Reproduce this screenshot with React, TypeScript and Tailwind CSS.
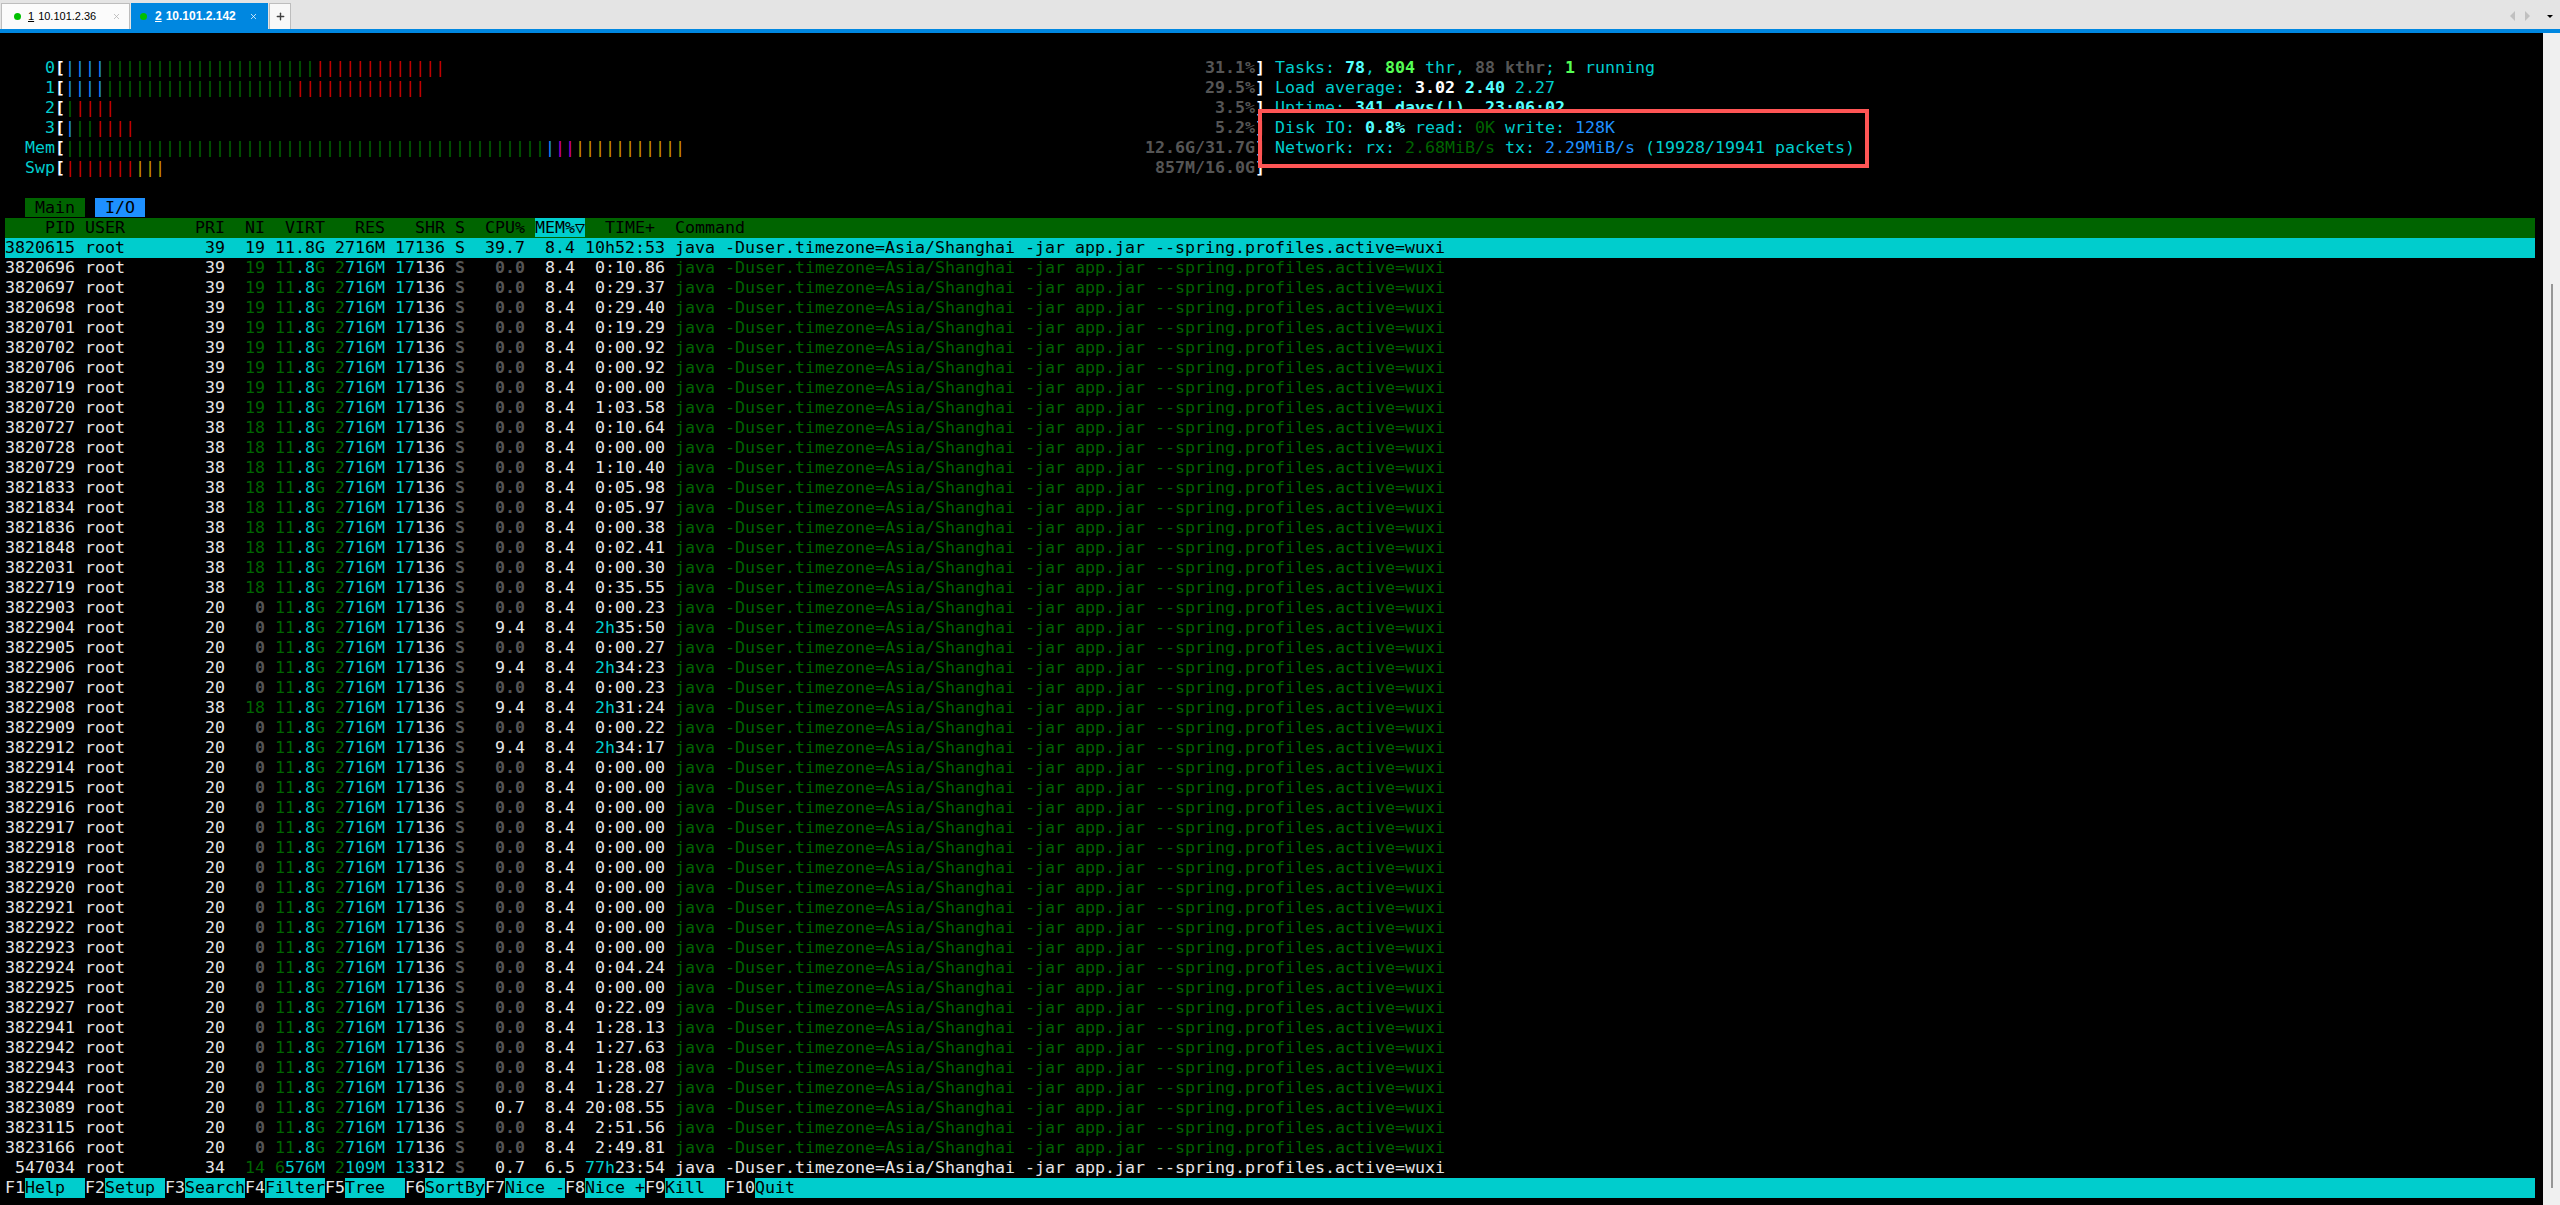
import { Plus, X } from "lucide-react";

const GREEN = "text-[#006400]";
const CYAN = "text-[#00cdcd]";
const BLUE = "text-[#1e90ff]";
const RED = "text-[#cd0000]";
const GRAY = "text-[#555555] font-bold";
const WHITE = "text-[#e5e5e5]";
const YELLOW = "text-[#cd9a00]";
const MAGENTA = "text-[#cd00cd]";

const CMD = "java -Duser.timezone=Asia/Shanghai -jar app.jar --spring.profiles.active=wuxi";

type Seg = [number, string];

const METERS: { label: string; bars: Seg[]; value: string }[] = [
  { label: "    0", bars: [[4, BLUE], [21, GREEN], [13, RED]], value: "31.1%" },
  { label: "    1", bars: [[4, BLUE], [19, GREEN], [13, RED]], value: "29.5%" },
  { label: "    2", bars: [[1, GREEN], [4, RED]], value: "3.5%" },
  { label: "    3", bars: [[1, BLUE], [2, GREEN], [4, RED]], value: "5.2%" },
  { label: "  Mem", bars: [[48, GREEN], [1, BLUE], [2, MAGENTA], [11, YELLOW]], value: "12.6G/31.7G" },
  { label: "  Swp", bars: [[7, RED], [3, YELLOW]], value: "857M/16.0G" },
];

// pid, pri, ni, time, cpu
type Row = { pid: string; pri: string; ni: string; time: string; cpu?: string };

const r = (pid: string, pri: string, ni: string, time: string, cpu?: string): Row => ({ pid, pri, ni, time, cpu });

const THREADS: Row[] = [
  r("3820696", "39", "19", "0:10.86"),
  r("3820697", "39", "19", "0:29.37"),
  r("3820698", "39", "19", "0:29.40"),
  r("3820701", "39", "19", "0:19.29"),
  r("3820702", "39", "19", "0:00.92"),
  r("3820706", "39", "19", "0:00.92"),
  r("3820719", "39", "19", "0:00.00"),
  r("3820720", "39", "19", "1:03.58"),
  r("3820727", "38", "18", "0:10.64"),
  r("3820728", "38", "18", "0:00.00"),
  r("3820729", "38", "18", "1:10.40"),
  r("3821833", "38", "18", "0:05.98"),
  r("3821834", "38", "18", "0:05.97"),
  r("3821836", "38", "18", "0:00.38"),
  r("3821848", "38", "18", "0:02.41"),
  r("3822031", "38", "18", "0:00.30"),
  r("3822719", "38", "18", "0:35.55"),
  r("3822903", "20", "0", "0:00.23"),
  r("3822904", "20", "0", "2h35:50", "9.4"),
  r("3822905", "20", "0", "0:00.27"),
  r("3822906", "20", "0", "2h34:23", "9.4"),
  r("3822907", "20", "0", "0:00.23"),
  r("3822908", "38", "18", "2h31:24", "9.4"),
  r("3822909", "20", "0", "0:00.22"),
  r("3822912", "20", "0", "2h34:17", "9.4"),
  r("3822914", "20", "0", "0:00.00"),
  r("3822915", "20", "0", "0:00.00"),
  r("3822916", "20", "0", "0:00.00"),
  r("3822917", "20", "0", "0:00.00"),
  r("3822918", "20", "0", "0:00.00"),
  r("3822919", "20", "0", "0:00.00"),
  r("3822920", "20", "0", "0:00.00"),
  r("3822921", "20", "0", "0:00.00"),
  r("3822922", "20", "0", "0:00.00"),
  r("3822923", "20", "0", "0:00.00"),
  r("3822924", "20", "0", "0:04.24"),
  r("3822925", "20", "0", "0:00.00"),
  r("3822927", "20", "0", "0:22.09"),
  r("3822941", "20", "0", "1:28.13"),
  r("3822942", "20", "0", "1:27.63"),
  r("3822943", "20", "0", "1:28.08"),
  r("3822944", "20", "0", "1:28.27"),
  r("3823089", "20", "0", "20:08.55", "0.7"),
  r("3823115", "20", "0", "2:51.56"),
  r("3823166", "20", "0", "2:49.81"),
];

const FKEYS = [
  ["F1", "Help  "],
  ["F2", "Setup "],
  ["F3", "Search"],
  ["F4", "Filter"],
  ["F5", "Tree  "],
  ["F6", "SortBy"],
  ["F7", "Nice -"],
  ["F8", "Nice +"],
  ["F9", "Kill  "],
  ["F10", "Quit"],
];

function Line({ className = "", children }: { className?: string; children?: React.ReactNode }) {
  return <div className={`h-5 leading-5 whitespace-pre ${className}`}>{children}</div>;
}

function Meter({ label, bars, value }: { label: string; bars: Seg[]; value: string }) {
  const used = bars.reduce((n, [c]) => n + c, 0);
  return (
    <>
      <span className={CYAN}>{label}</span>
      <span className="text-white font-bold">[</span>
      {bars.map(([count, color], i) => (
        <span key={i} className={color}>{"|".repeat(count)}</span>
      ))}
      {" ".repeat(119 - used - value.length)}
      <span className={GRAY}>{value}</span>
      <span className="text-white font-bold">]</span>
    </>
  );
}

function ProcRow({ row }: { row: Row }) {
  const nice = row.ni === "0" ? GRAY : GREEN;
  const cpu = row.cpu ?? "0.0";
  const h = row.time.indexOf("h");
  return (
    <Line className={WHITE}>
      {row.pid.padStart(7) + " " + "root".padEnd(11) + row.pri.padStart(3) + " "}
      <span className={nice}>{row.ni.padStart(3)}</span>{" "}
      <span className={GREEN}>11</span><span className={CYAN}>.8</span><span className={GREEN}>G</span>{" "}
      <span className={GREEN}>2</span><span className={CYAN}>716M</span>{" "}
      <span className={CYAN}>17</span>136{" "}
      <span className={GRAY}>S</span>{" "}
      <span className={row.cpu ? "" : GRAY}>{cpu.padStart(5)}</span>{"  8.4 "}
      {h > 0 ? (
        <>
          {" "}
          <span className={CYAN}>{row.time.slice(0, h + 1)}</span>
          {row.time.slice(h + 1)}
        </>
      ) : (
        row.time.padStart(8)
      )}{" "}
      <span className={GREEN}>{CMD}</span>
    </Line>
  );
}

export default function App() {
  return (
    <div className="h-[1205px] flex flex-col overflow-hidden bg-black">
      {/* session tabs */}
      <div className="h-[33px] shrink-0 bg-[#e4e4e4] border-b-4 border-[#0087e0] flex items-end pl-px font-['Liberation_Sans',sans-serif]">
        <div className="w-[129px] h-[26px] bg-[#fbfbfb] border border-b-0 border-[#bdbdbd] flex items-center pl-[12px] text-black text-[11px]">
          <span className="w-[7px] h-[7px] rounded-full bg-[#00c000] mr-[7px]" />
          <span className="underline mr-[4px]">1</span>
          <span>10.101.2.36</span>
          <X size={9} className="ml-[16px] text-[#b0b0b0]" />
        </div>
        <div className="w-[137px] h-[26px] ml-px bg-[#0087e0] flex items-center pl-[9px] text-white font-bold text-[12px]">
          <span className="w-[7px] h-[7px] rounded-full bg-[#00c000] mr-[8px]" />
          <span className="underline mr-[4px]">2</span>
          <span>10.101.2.142</span>
          <X size={9} className="ml-[13px] text-white" />
        </div>
        <div className="w-[22px] h-[26px] ml-px bg-[#f8f8f8] border border-b-0 border-[#bdbdbd] flex items-center justify-center">
          <Plus size={11} strokeWidth={3} className="text-[#404040]" />
        </div>
        <div className="ml-auto h-[26px] flex items-center pr-[7px] gap-[10px]">
          <span className="w-0 h-0 border-y-[5px] border-y-transparent border-r-[5px] border-r-[#c0c0c0]" />
          <span className="w-0 h-0 border-y-[5px] border-y-transparent border-l-[5px] border-l-[#c0c0c0]" />
          <span className="ml-[7px] w-0 h-0 border-x-[3px] border-x-transparent border-t-[3px] border-t-black" />
        </div>
      </div>

      <div className="flex-1 flex relative">
        {/* terminal */}
        <div className="flex-1 pl-[5px] pt-[25px] font-['DejaVu_Sans_Mono',monospace] text-[16.61px] overflow-hidden">
          <div className="w-[2530px]">
            {METERS.map((m, i) => (
              <Line key={m.label}>
                <Meter {...m} />
                {i === 0 && (
                  <>
                    {" "}
                    <span className={CYAN}>Tasks: </span>
                    <span className="text-[#55ffff] font-bold">78</span>
                    <span className={CYAN}>, </span>
                    <span className="text-[#55ff55] font-bold">804</span>
                    <span className={CYAN}> thr, </span>
                    <span className={GRAY}>88 kthr</span>
                    <span className={CYAN}>; </span>
                    <span className="text-[#55ff55] font-bold">1</span>
                    <span className={CYAN}> running</span>
                  </>
                )}
                {i === 1 && (
                  <>
                    {" "}
                    <span className={CYAN}>Load average: </span>
                    <span className="text-white font-bold">3.02 </span>
                    <span className="text-[#55ffff] font-bold">2.40 </span>
                    <span className={CYAN}>2.27</span>
                  </>
                )}
                {i === 2 && (
                  <>
                    {" "}
                    <span className={CYAN}>Uptime: </span>
                    <span className="text-[#55ffff] font-bold">341 days(!), 23:06:02</span>
                  </>
                )}
                {i === 3 && (
                  <>
                    {" "}
                    <span className={CYAN}>Disk IO: </span>
                    <span className="text-[#55ffff] font-bold">0.8% </span>
                    <span className={CYAN}>read: </span>
                    <span className={GREEN}>0K </span>
                    <span className={CYAN}>write: </span>
                    <span className={BLUE}>128K</span>
                  </>
                )}
                {i === 4 && (
                  <>
                    {" "}
                    <span className={CYAN}>Network: rx: </span>
                    <span className={GREEN}>2.68MiB/s </span>
                    <span className={CYAN}>tx: </span>
                    <span className={BLUE}>2.29MiB/s </span>
                    <span className={CYAN}>(19928/19941 packets)</span>
                  </>
                )}
              </Line>
            ))}
            <Line />
            <Line>
              {"  "}
              <span className="bg-[#006400] text-black">{" Main "}</span>
              {" "}
              <span className="bg-[#1e90ff] text-black">{" I/O "}</span>
            </Line>
            <Line className="bg-[#006400] text-black">
              {"    PID USER       PRI  NI  VIRT   RES   SHR S  CPU% "}
              <span className="bg-[#00cdcd]">MEM%▽</span>
              {"  TIME+  Command"}
            </Line>
            <Line className="bg-[#00cdcd] text-black">
              {"3820615 root        39  19 11.8G 2716M 17136 S  39.7  8.4 10h52:53 " + CMD}
            </Line>
            {THREADS.map((row) => (
              <ProcRow key={row.pid} row={row} />
            ))}
            <Line className={WHITE}>
              {" 547034 " + "root".padEnd(11) + " 34 "}
              <span className={GREEN}> 14</span>{" "}
              <span className={GREEN}>6</span><span className={CYAN}>576M</span>{" "}
              <span className={GREEN}>2</span><span className={CYAN}>109M</span>{" "}
              <span className={CYAN}>13</span>312{" "}
              <span className={GRAY}>S</span>{"   0.7  6.5 "}
              <span className={CYAN}>77h</span>23:54 {CMD}
            </Line>
            <Line className="flex">
              {FKEYS.map(([key, label]) => (
                <span key={key} className={label === "Quit" ? "flex-1 flex" : "flex"}>
                  <span className={WHITE}>{key}</span>
                  <span className="flex-1 bg-[#00cdcd] text-black">{label}</span>
                </span>
              ))}
            </Line>
          </div>
        </div>

        {/* scrollbar */}
        <div className="w-[17px] shrink-0 bg-[#f0f0f0] pl-[8px] pt-[251px] pb-[17px]">
          <div className="w-[2px] h-full bg-[#969696]" />
        </div>

        {/* annotation over the terminal, it hides the tail of the line above */}
        <div className="absolute left-[1258px] top-[76px] w-[611px] h-[59px] border-4 border-[#ff5555]">
          <div className="h-[5px] bg-black" />
        </div>
      </div>
    </div>
  );
}
